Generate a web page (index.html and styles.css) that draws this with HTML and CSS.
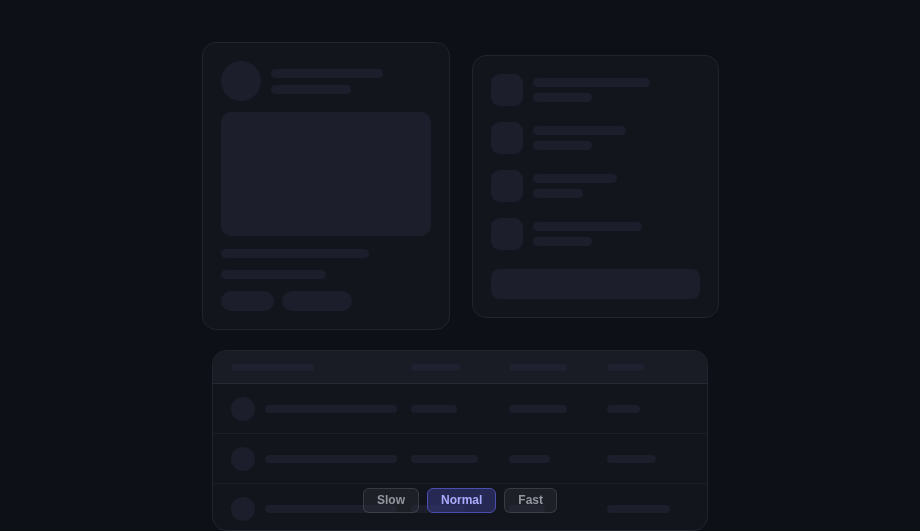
FILE: index.html
```html
<!DOCTYPE html>
<html>
<head>
<meta charset="utf-8">
<link rel="stylesheet" href="styles.css">
</head>
<body>
<div class="page">
  <div class="cards">
    <div class="card post">
      <div class="post-head">
        <div class="avatar"></div>
        <div class="lines">
          <div class="bar" style="width:112px"></div>
          <div class="bar" style="width:80px"></div>
        </div>
      </div>
      <div class="media"></div>
      <div class="bar text1" style="width:148px"></div>
      <div class="bar text2" style="width:105px"></div>
      <div class="pills">
        <div class="pill" style="width:53px"></div>
        <div class="pill" style="width:70px"></div>
      </div>
    </div>
    <div class="card list">
      <div class="items">
        <div class="item"><div class="thumb"></div><div class="lines tight"><div class="bar" style="width:117px"></div><div class="bar" style="width:59px"></div></div></div>
        <div class="item"><div class="thumb"></div><div class="lines tight"><div class="bar" style="width:93px"></div><div class="bar" style="width:59px"></div></div></div>
        <div class="item"><div class="thumb"></div><div class="lines tight"><div class="bar" style="width:84px"></div><div class="bar" style="width:50px"></div></div></div>
        <div class="item"><div class="thumb"></div><div class="lines tight"><div class="bar" style="width:109px"></div><div class="bar" style="width:59px"></div></div></div>
      </div>
      <div class="block-btn"></div>
    </div>
  </div>
  <div class="table">
    <div class="row head">
      <div class="cell"><div class="hbar" style="width:83px"></div></div>
      <div class="cell"><div class="hbar" style="width:49px"></div></div>
      <div class="cell"><div class="hbar" style="width:58px"></div></div>
      <div class="cell"><div class="hbar" style="width:37px"></div></div>
    </div>
    <div class="row">
      <div class="cell first"><div class="dot"></div><div class="rbar" style="width:132px"></div></div>
      <div class="cell"><div class="rbar" style="width:46px"></div></div>
      <div class="cell"><div class="rbar" style="width:58px"></div></div>
      <div class="cell"><div class="rbar" style="width:33px"></div></div>
    </div>
    <div class="row">
      <div class="cell first"><div class="dot"></div><div class="rbar" style="width:132px"></div></div>
      <div class="cell"><div class="rbar" style="width:67px"></div></div>
      <div class="cell"><div class="rbar" style="width:41px"></div></div>
      <div class="cell"><div class="rbar" style="width:49px"></div></div>
    </div>
    <div class="row">
      <div class="cell first"><div class="dot"></div><div class="rbar" style="width:132px"></div></div>
      <div class="cell"><div class="rbar" style="width:54px"></div></div>
      <div class="cell"><div class="rbar" style="width:36px"></div></div>
      <div class="cell"><div class="rbar" style="width:63px"></div></div>
    </div>
  </div>
</div>
<div class="speed">
  <button class="sbtn">Slow</button>
  <button class="sbtn active">Normal</button>
  <button class="sbtn">Fast</button>
</div>
</body>
</html>
```
FILE: styles.css
```css
* { box-sizing: border-box; }
html, body { margin: 0; padding: 0; }
body {
  background: #0e1018;
  width: 920px;
  height: 531px;
  overflow: hidden;
  font-family: "Liberation Sans", Arial, sans-serif;
}
.page {
  display: flex;
  flex-direction: column;
  align-items: center;
  padding-top: 42px;
}
.cards {
  display: flex;
  align-items: center;
  gap: 22px;
}
.card {
  background: #13151d;
  border: 1px solid #21232d;
  border-radius: 14px;
  padding: 18px;
}
.post { width: 248px; }
.list { width: 247px; }
.bar {
  height: 9px;
  border-radius: 5px;
  background: #1c1e2b;
}
.post-head {
  display: flex;
  align-items: center;
  gap: 10px;
}
.avatar {
  width: 40px;
  height: 40px;
  border-radius: 50%;
  background: #1c1e2b;
}
.lines {
  display: flex;
  flex-direction: column;
  gap: 7px;
}
.lines.tight { gap: 6px; }
.media {
  margin-top: 11px;
  height: 124px;
  border-radius: 10px;
  background: #1c1e2b;
}
.text1 { margin-top: 13px; }
.text2 { margin-top: 12px; }
.pills {
  display: flex;
  gap: 8px;
  margin-top: 12px;
}
.pill {
  height: 20px;
  border-radius: 10px;
  background: #1c1e2b;
}
.items {
  display: flex;
  flex-direction: column;
  gap: 16px;
}
.item {
  display: flex;
  align-items: center;
  gap: 10px;
}
.thumb {
  width: 32px;
  height: 32px;
  border-radius: 9px;
  background: #1c1e2b;
}
.block-btn {
  margin-top: 19px;
  height: 30px;
  border-radius: 8px;
  background: #1c1e2b;
}
.table {
  margin-top: 20px;
  width: 496px;
  height: 181px;
  overflow: hidden;
  background: #13151d;
  border: 1px solid #21232d;
  border-radius: 14px;
}
.row {
  display: grid;
  grid-template-columns: minmax(0, 2fr) repeat(3, minmax(0, 1fr));
  column-gap: 16px;
  align-items: center;
  padding: 0 18px;
  height: 50px;
  border-bottom: 1px solid #1d1f28;
}
.row.head {
  height: 33px;
  background: #1a1c25;
  border-bottom: 1px solid #272933;
}
.cell { display: flex; align-items: center; }
.first { gap: 10px; }
.hbar {
  height: 7px;
  border-radius: 4px;
  background: #1f2130;
}
.rbar {
  flex: none;
  height: 8px;
  border-radius: 4px;
  background: #1c1e2b;
}
.dot {
  flex: none;
  width: 24px;
  height: 24px;
  border-radius: 50%;
  background: #1c1e2b;
}
.speed {
  position: fixed;
  left: 0;
  right: 0;
  bottom: 18px;
  display: flex;
  justify-content: center;
  gap: 8px;
}
.sbtn {
  height: 25px;
  padding: 0 13px;
  border-radius: 6px;
  border: 1px solid rgba(255,255,255,0.12);
  background: rgba(44,46,56,0.45);
  color: #95969f;
  font-family: "Liberation Sans", Arial, sans-serif;
  font-weight: bold;
  font-size: 12px;
  line-height: 23px;
}
.sbtn.active {
  background: rgba(48,50,110,0.7);
  border-color: #4b4eae;
  color: #a9acfc;
}
```
